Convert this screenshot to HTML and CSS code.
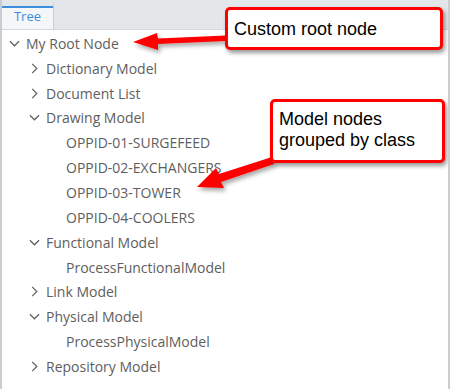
FILE: index.html
```html
<!DOCTYPE html>
<html>
<head>
<meta charset="utf-8">
<link rel="stylesheet" href="styles.css">
</head>
<body>
<div class="panel">
  <div class="tabbar">
    <div class="tab">Tree</div>
  </div>
  <ul class="tree">
    <li class="row l0"><svg class="chev" viewBox="0 0 12 12"><path d="M1 3.5 L6 8.5 L11 3.5"/></svg><span>My Root Node</span></li>
    <li class="row l1"><svg class="chev" viewBox="0 0 12 12"><path d="M3.5 1 L8.5 6 L3.5 11"/></svg><span>Dictionary Model</span></li>
    <li class="row l1"><svg class="chev" viewBox="0 0 12 12"><path d="M3.5 1 L8.5 6 L3.5 11"/></svg><span>Document List</span></li>
    <li class="row l1"><svg class="chev" viewBox="0 0 12 12"><path d="M1 3.5 L6 8.5 L11 3.5"/></svg><span>Drawing Model</span></li>
    <li class="row l2"><span>OPPID-01-SURGEFEED</span></li>
    <li class="row l2"><span>OPPID-02-EXCHANGERS</span></li>
    <li class="row l2"><span>OPPID-03-TOWER</span></li>
    <li class="row l2"><span>OPPID-04-COOLERS</span></li>
    <li class="row l1"><svg class="chev" viewBox="0 0 12 12"><path d="M1 3.5 L6 8.5 L11 3.5"/></svg><span>Functional Model</span></li>
    <li class="row l2"><span>ProcessFunctionalModel</span></li>
    <li class="row l1"><svg class="chev" viewBox="0 0 12 12"><path d="M3.5 1 L8.5 6 L3.5 11"/></svg><span>Link Model</span></li>
    <li class="row l1"><svg class="chev" viewBox="0 0 12 12"><path d="M1 3.5 L6 8.5 L11 3.5"/></svg><span>Physical Model</span></li>
    <li class="row l2"><span>ProcessPhysicalModel</span></li>
    <li class="row l1"><svg class="chev" viewBox="0 0 12 12"><path d="M3.5 1 L8.5 6 L3.5 11"/></svg><span>Repository Model</span></li>
  </ul>

  <svg class="arrows" width="450" height="389" viewBox="0 0 450 389">
    <defs>
      <filter id="sh" x="-20%" y="-20%" width="140%" height="160%">
        <feDropShadow dx="2" dy="3" stdDeviation="2" flood-color="#000" flood-opacity="0.35"/>
      </filter>
    </defs>
    <g filter="url(#sh)" fill="#f00" stroke="none">
      <path d="M226 35.5 L158 38.5 L157 33 L133 42 L158 50 L158 44 L226 41 Z"/>
      <path d="M272 157 L219 174 L216 168 L197 187 L224 188 L221 182 L274 164 Z"/>
    </g>
  </svg>
  <div class="callout c1">Custom root node</div>
  <div class="callout c2">Model nodes<br>grouped by class</div>
</div>
</body>
</html>
```

FILE: styles.css
```css
html, body {
  margin: 0;
  padding: 0;
  background: #fff;
}
.panel {
  position: relative;
  width: 450px;
  height: 389px;
  box-sizing: border-box;
  border-left: 2px solid #c9ccd0;
  border-right: 2px solid #c9ccd0;
  overflow: hidden;
  font-family: "Open Sans", sans-serif;
}
.tabbar {
  height: 30px;
  background: #e4e7ea;
  border-bottom: 1px solid #d4d7db;
  box-sizing: border-box;
  display: flex;
}
.tab {
  width: 52px;
  height: 29px;
  box-sizing: border-box;
  background: #f5f6f7;
  border-top: 6px solid #e4e7ea;
  border-right: 1px solid #c9ccd0;
  position: relative;
  color: #3a8ee0;
  font-size: 13px;
  text-align: center;
  line-height: 20px;
}
.tab::before {
  content: "";
  display: block;
  position: absolute;
  left: 0;
  right: 0;
  top: 0;
  height: 2px;
  background: #3a8ee0;
}
.tree {
  list-style: none;
  margin: 0;
  padding: 1px 0 0 0;
}
.row {
  height: 24.85px;
  display: flex;
  align-items: center;
  font-size: 14px;
  color: #5e5e5e;
  white-space: nowrap;
}
.chev {
  width: 11px;
  height: 11px;
  fill: none;
  stroke: #5e5e5e;
  stroke-width: 1.3;
  margin-right: 6px;
  flex: none;
}
.l0 { padding-left: 7px; }
.l1 { padding-left: 27px; }
.l2 { padding-left: 64px; }
.arrows {
  position: absolute;
  left: -2px;
  top: 0;
}
.callout {
  position: absolute;
  box-sizing: border-box;
  background: #fff;
  border: 3px solid #f00;
  border-radius: 5px;
  box-shadow: 2px 3px 4px rgba(0,0,0,0.4);
  font-family: "Liberation Sans", Arial, sans-serif;
  font-size: 18px;
  color: #000;
  line-height: 21px;
}
.c1 {
  left: 223px;
  top: 7px;
  width: 218px;
  height: 43px;
  padding: 9px 0 0 6px;
}
.c2 {
  left: 268px;
  top: 99px;
  width: 175px;
  height: 64px;
  padding: 7px 0 0 6px;
}
```
